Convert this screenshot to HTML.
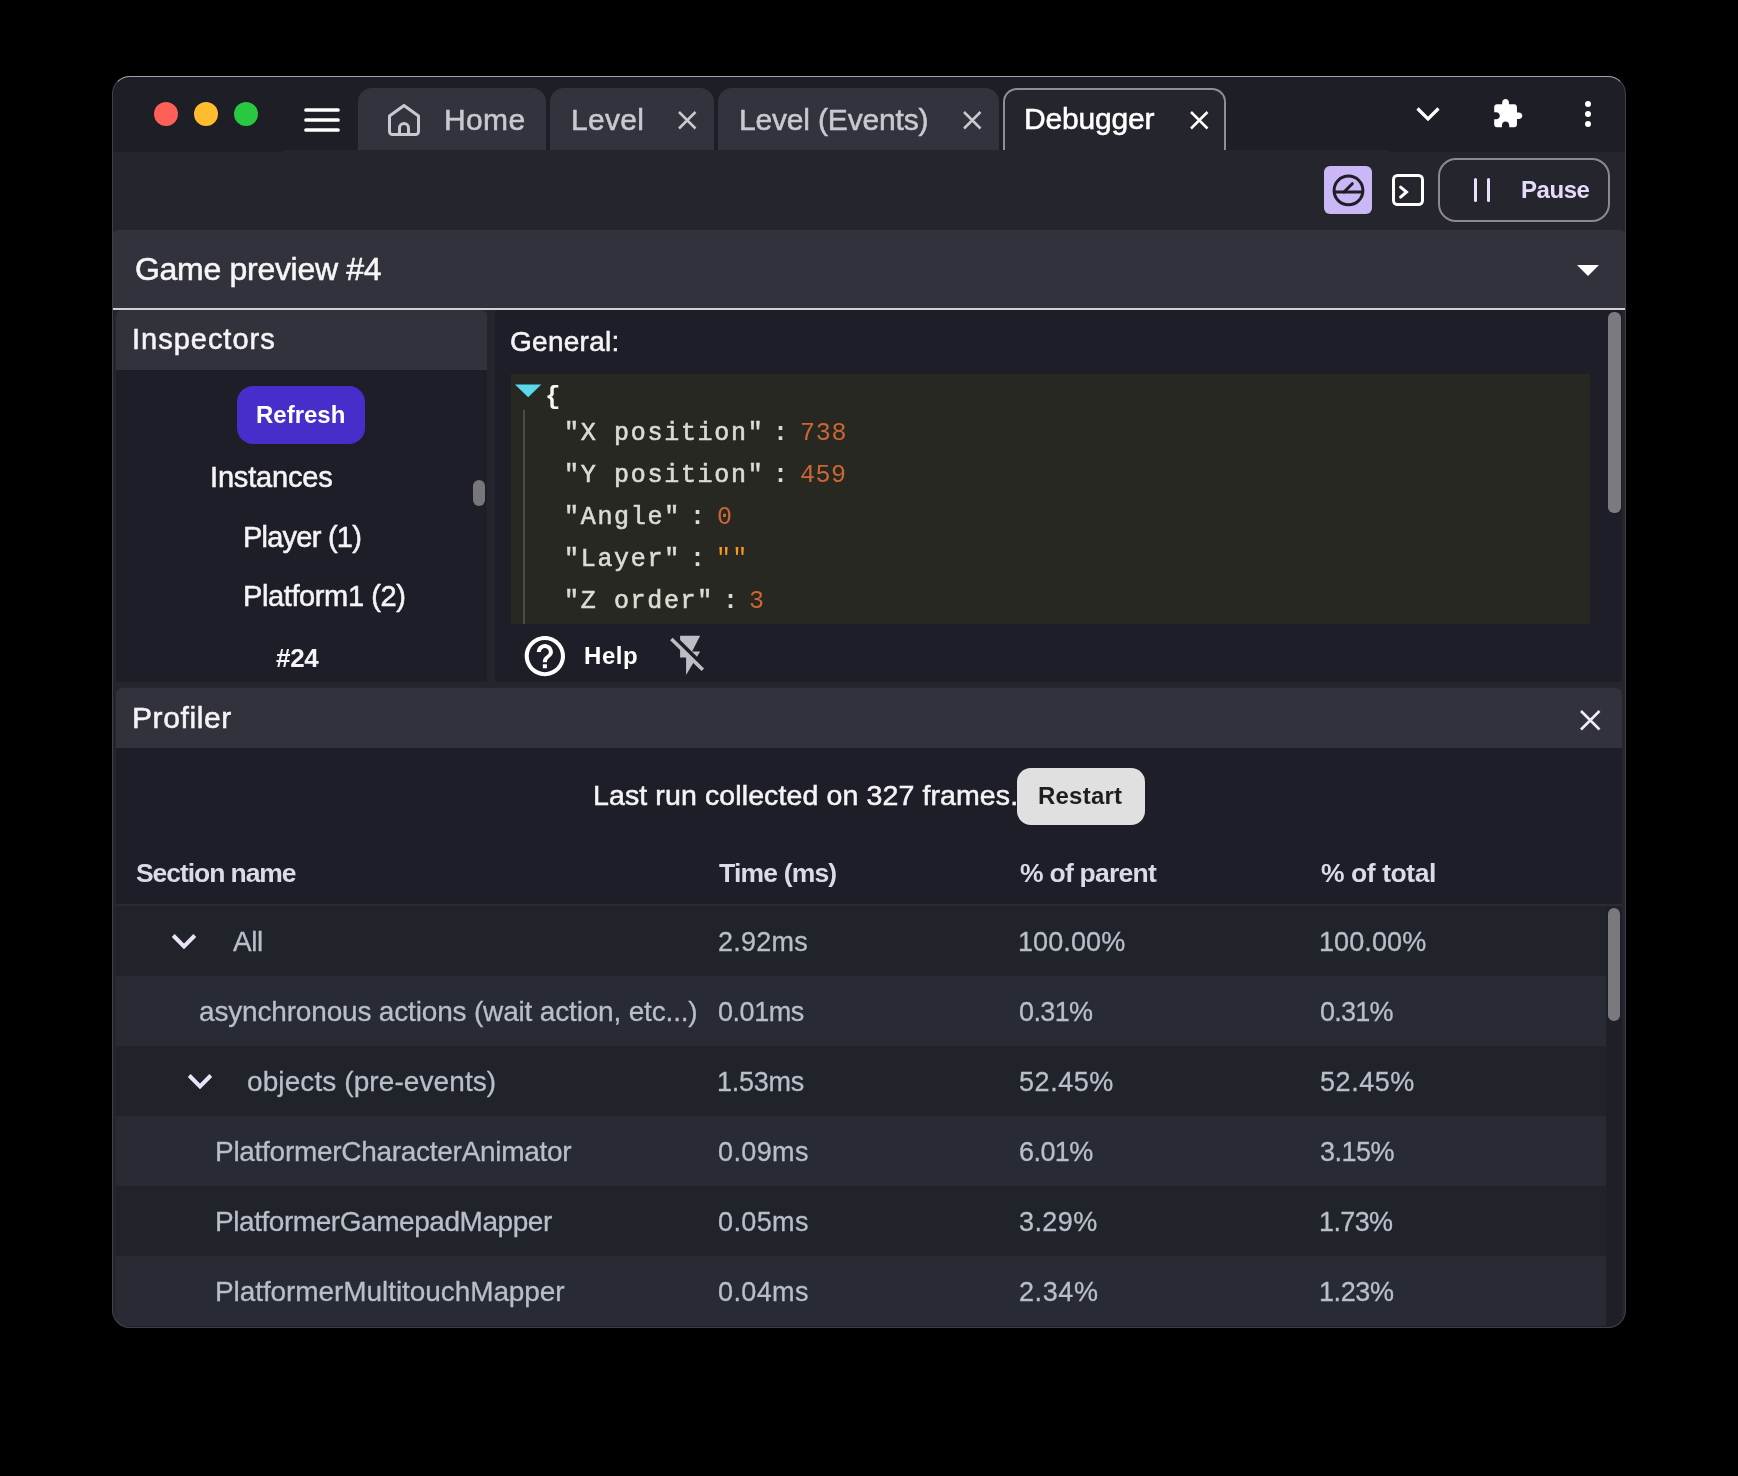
<!DOCTYPE html>
<html><head><meta charset="utf-8"><style>
html,body{margin:0;padding:0;width:1738px;height:1476px;background:#000;overflow:hidden;position:relative}
div,svg{position:absolute;box-sizing:content-box}
.t{white-space:pre;will-change:transform}
</style></head><body>
<div style="left:0;top:0;width:1738px;height:1476px;clip-path:inset(76px 112px 148px 112px round 18px)">
<div style="left:112px;top:76px;width:1514px;height:1252px;background:#25252e;border-radius:18px;overflow:hidden;"><div style="left:0;top:0;width:1514px;height:74px;background:#1e1e26"></div><div style="left:0;top:74px;width:170px;height:1.5px;background:#1e1e26"></div><div style="left:1278px;top:74px;width:240px;height:2px;background:#1e1e26"></div></div>
<div style="left:154px;top:102px;width:24px;height:24px;border-radius:50%;background:#fe5f57"></div>
<div style="left:194px;top:102px;width:24px;height:24px;border-radius:50%;background:#febc2e"></div>
<div style="left:234px;top:102px;width:24px;height:24px;border-radius:50%;background:#28c840"></div>
<svg style="left:300px;top:100px;" width="45" height="40" viewBox="300 100 45 40"><g stroke="#fff" stroke-width="3.7" stroke-linecap="round"><path d="M306 110H338M306 120H338M306 130H338"/></g></svg>
<div style="left:358px;top:88px;width:188px;height:62px;background:#33333d;border-radius:14px 14px 0 0;"></div>
<div style="left:550px;top:88px;width:164px;height:62px;background:#33333d;border-radius:14px 14px 0 0;"></div>
<div style="left:718px;top:88px;width:281px;height:62px;background:#33333d;border-radius:14px 14px 0 0;"></div>
<div style="left:1003px;top:88px;width:219px;height:60px;background:#25252e;border-radius:14px 14px 0 0;border:2px solid #8e8e96;border-bottom:none;"></div>
<svg style="left:380px;top:95px;" width="50" height="50" viewBox="380 95 50 50"><path d="M389.5 116 L404 105.5 L418.5 116 V131.5 a3 3 0 0 1 -3 3 H392.5 a3 3 0 0 1 -3 -3 Z M399.5 134.5 V128 a4.5 4.5 0 0 1 9 0 V134.5" fill="none" stroke="#c9c9d1" stroke-width="3" stroke-linejoin="round"/></svg>
<div class="t" style="left:443.60px;top:104.80px;font-size:30px;line-height:30px;color:#c9c9d1;font-weight:400;font-family:'Liberation Sans', sans-serif;letter-spacing:0.367px;-webkit-text-stroke:0.55px #c9c9d1;">Home</div>
<div class="t" style="left:570.60px;top:104.80px;font-size:30px;line-height:30px;color:#c9c9d1;font-weight:400;font-family:'Liberation Sans', sans-serif;letter-spacing:0.288px;-webkit-text-stroke:0.55px #c9c9d1;">Level</div>
<div class="t" style="left:739.00px;top:104.80px;font-size:30px;line-height:30px;color:#c9c9d1;font-weight:400;font-family:'Liberation Sans', sans-serif;letter-spacing:-0.177px;-webkit-text-stroke:0.55px #c9c9d1;">Level (Events)</div>
<div class="t" style="left:1024.30px;top:104.40px;font-size:30px;line-height:30px;color:#ffffff;font-weight:400;font-family:'Liberation Sans', sans-serif;letter-spacing:-0.193px;-webkit-text-stroke:0.55px #ffffff;">Debugger</div>
<svg style="left:676.25px;top:108.75px;" width="22.5" height="22.5" viewBox="676.25 108.75 22.5 22.5"><path d="M679.25 111.75L695.75 128.25M695.75 111.75L679.25 128.25" stroke="#c9c9d1" stroke-width="2.5"/></svg>
<svg style="left:961.15px;top:108.75px;" width="22.5" height="22.5" viewBox="961.15 108.75 22.5 22.5"><path d="M964.15 111.75L980.65 128.25M980.65 111.75L964.15 128.25" stroke="#c9c9d1" stroke-width="2.5"/></svg>
<svg style="left:1187.75px;top:108.75px;" width="22.5" height="22.5" viewBox="1187.75 108.75 22.5 22.5"><path d="M1190.75 111.75L1207.25 128.25M1207.25 111.75L1190.75 128.25" stroke="#ffffff" stroke-width="2.5"/></svg>
<svg style="left:1410px;top:100px;" width="36" height="30" viewBox="1410 100 36 30"><path d="M1417.5 108.5L1428 119L1438.5 108.5" fill="none" stroke="#fff" stroke-width="3.2"/></svg>
<svg style="left:1488px;top:94px;" width="40" height="40" viewBox="1488 94 40 40"><path transform="translate(1491.5 97.66) scale(1.34)" fill="#fff" d="M20.5 11H19V7c0-1.1-.9-2-2-2h-4V3.5C13 2.12 11.88 1 10.5 1S8 2.12 8 3.5V5H4c-1.1 0-1.99.9-1.99 2v3.8H3.5c1.490 0 2.7 1.21 2.7 2.7s-1.21 2.7-2.7 2.7H2V20c0 1.1.9 2 2 2h3.8v-1.5c0-1.49 1.21-2.7 2.7-2.7 1.49 0 2.7 1.21 2.7 2.7V22H17c1.1 0 2-.9 2-2v-4h1.5c1.38 0 2.5-1.12 2.5-2.5S21.88 11 20.5 11z"/></svg>
<div style="left:1584.7px;top:100.7px;width:6.6px;height:6.6px;border-radius:50%;background:#fff"></div>
<div style="left:1584.7px;top:110.7px;width:6.6px;height:6.6px;border-radius:50%;background:#fff"></div>
<div style="left:1584.7px;top:120.7px;width:6.6px;height:6.6px;border-radius:50%;background:#fff"></div>
<div style="left:1324px;top:166px;width:48px;height:48px;border-radius:6px;background:#c9b8f5"></div>
<svg style="left:1320px;top:160px;" width="56" height="60" viewBox="1320 160 56 60"><g fill="none" stroke="#1f1d28" stroke-width="3" stroke-linecap="round"><circle cx="1348.5" cy="190.4" r="14.4"/><path d="M1334 192H1363" stroke-linecap="butt"/><path d="M1344 192L1352.3 183.7"/></g></svg>
<svg style="left:1388px;top:170px;" width="40" height="40" viewBox="1388 170 40 40"><g fill="none" stroke="#fff" stroke-width="3"><rect x="1393.5" y="175.5" width="29" height="29" rx="4"/><path d="M1400.6 187.1L1406.5 192L1400.6 197.1" stroke-linecap="round"/></g></svg>
<div style="left:1438px;top:158px;width:168px;height:60px;border:2px solid #8d8898;border-radius:18px"></div>
<div style="left:1473.7px;top:178px;width:3.5px;height:24.3px;border-radius:2px;background:#e8e0fc"></div>
<div style="left:1486.8px;top:178px;width:3.5px;height:24.3px;border-radius:2px;background:#e8e0fc"></div>
<div class="t" style="left:1521.34px;top:177.78px;font-size:24px;line-height:24px;color:#e6dcfa;font-weight:700;font-family:'Liberation Sans', sans-serif;letter-spacing:-0.445px;">Pause</div>
<div style="left:112px;top:230px;width:1514px;height:78px;background:#32323c;border-radius:6px 6px 0 0"></div>
<div style="left:112px;top:308px;width:1514px;height:2px;background:#d2d2d6;"></div>
<div class="t" style="left:135.10px;top:253.11px;font-size:32px;line-height:32px;color:#f6f6f6;font-weight:400;font-family:'Liberation Sans', sans-serif;letter-spacing:-0.297px;-webkit-text-stroke:0.55px #f6f6f6;">Game preview #4</div>
<svg style="left:1570px;top:258px;" width="36" height="26" viewBox="1570 258 36 26"><path d="M1577 265H1599L1588 276Z" fill="#fff"/></svg>
<div style="left:116px;top:310px;width:371px;height:372px;background:#1e1e28;border-radius:6px 6px 0 0;overflow:hidden"><div style="left:0;top:0;width:371px;height:60px;background:#32323c"></div></div>
<div class="t" style="left:131.59px;top:325.45px;font-size:29px;line-height:29px;color:#f4f4f6;font-weight:400;font-family:'Liberation Sans', sans-serif;letter-spacing:0.988px;-webkit-text-stroke:0.55px #f4f4f6;">Inspectors</div>
<div style="left:237px;top:386px;width:128px;height:58px;border-radius:16px;background:#472dca"></div>
<div class="t" style="left:256.24px;top:402.98px;font-size:24px;line-height:24px;color:#ffffff;font-weight:700;font-family:'Liberation Sans', sans-serif;letter-spacing:0.000px;">Refresh</div>
<div class="t" style="left:210.29px;top:462.95px;font-size:29px;line-height:29px;color:#f4f4f6;font-weight:400;font-family:'Liberation Sans', sans-serif;letter-spacing:-0.174px;-webkit-text-stroke:0.55px #f4f4f6;">Instances</div>
<div class="t" style="left:242.68px;top:522.65px;font-size:29px;line-height:29px;color:#f4f4f6;font-weight:400;font-family:'Liberation Sans', sans-serif;letter-spacing:-0.768px;-webkit-text-stroke:0.55px #f4f4f6;">Player (1)</div>
<div class="t" style="left:242.68px;top:582.05px;font-size:29px;line-height:29px;color:#f4f4f6;font-weight:400;font-family:'Liberation Sans', sans-serif;letter-spacing:-0.385px;-webkit-text-stroke:0.55px #f4f4f6;">Platform1 (2)</div>
<div class="t" style="left:275.61px;top:644.99px;font-size:26px;line-height:26px;color:#f4f4f6;font-weight:700;font-family:'Liberation Sans', sans-serif;letter-spacing:-0.285px;">#24</div>
<div style="left:473px;top:480px;width:12px;height:26px;border-radius:6px;background:#77777b"></div>
<div style="left:495px;top:310px;width:1127px;height:372px;background:#1e1e28;"></div>
<div class="t" style="left:510.00px;top:327.79px;font-size:28px;line-height:28px;color:#f4f4f6;font-weight:400;font-family:'Liberation Sans', sans-serif;letter-spacing:0.263px;-webkit-text-stroke:0.55px #f4f4f6;">General:</div>
<div style="left:511px;top:374px;width:1079px;height:250px;background:#272822;"></div>
<svg style="left:512px;top:380px;" width="34" height="22" viewBox="512 380 34 22"><path d="M515 384.4H541.3L528.2 397.2Z" fill="#58d9ec"/></svg>
<div style="left:523px;top:410px;width:2px;height:214px;background:#4e4b44;"></div>
<div class="t" style="left:544.53px;top:384.08px;font-size:26px;line-height:26px;color:#f8f8f2;font-weight:700;font-family:'Liberation Mono', monospace;letter-spacing:0.000px;">{</div>
<div class="t" style="left:564.23px;top:420.85px;font-size:25px;line-height:25px;color:#dcdcd4;font-weight:400;font-family:'Liberation Mono', monospace;letter-spacing:1.695px;-webkit-text-stroke:0.6px #dcdcd4">"X position"</div>
<div class="t" style="left:772.75px;top:420.85px;font-size:25px;line-height:25px;color:#dcdcd4;font-weight:700;font-family:'Liberation Mono', monospace;letter-spacing:0.000px;">:</div>
<div class="t" style="left:799.62px;top:420.85px;font-size:25px;line-height:25px;color:#cc6633;font-weight:400;font-family:'Liberation Mono', monospace;letter-spacing:0.750px;">738</div>
<div class="t" style="left:564.23px;top:462.85px;font-size:25px;line-height:25px;color:#dcdcd4;font-weight:400;font-family:'Liberation Mono', monospace;letter-spacing:1.695px;-webkit-text-stroke:0.6px #dcdcd4">"Y position"</div>
<div class="t" style="left:772.75px;top:462.85px;font-size:25px;line-height:25px;color:#dcdcd4;font-weight:700;font-family:'Liberation Mono', monospace;letter-spacing:0.000px;">:</div>
<div class="t" style="left:800.25px;top:462.85px;font-size:25px;line-height:25px;color:#cc6633;font-weight:400;font-family:'Liberation Mono', monospace;letter-spacing:0.500px;">459</div>
<div class="t" style="left:564.23px;top:504.85px;font-size:25px;line-height:25px;color:#dcdcd4;font-weight:400;font-family:'Liberation Mono', monospace;letter-spacing:1.692px;-webkit-text-stroke:0.6px #dcdcd4">"Angle"</div>
<div class="t" style="left:689.65px;top:504.85px;font-size:25px;line-height:25px;color:#dcdcd4;font-weight:700;font-family:'Liberation Mono', monospace;letter-spacing:0.000px;">:</div>
<div class="t" style="left:717.00px;top:504.85px;font-size:25px;line-height:25px;color:#cc6633;font-weight:400;font-family:'Liberation Mono', monospace;letter-spacing:0.000px;">0</div>
<div class="t" style="left:564.23px;top:546.85px;font-size:25px;line-height:25px;color:#dcdcd4;font-weight:400;font-family:'Liberation Mono', monospace;letter-spacing:1.692px;-webkit-text-stroke:0.6px #dcdcd4">"Layer"</div>
<div class="t" style="left:689.65px;top:546.85px;font-size:25px;line-height:25px;color:#dcdcd4;font-weight:700;font-family:'Liberation Mono', monospace;letter-spacing:0.000px;">:</div>
<div class="t" style="left:716.02px;top:546.85px;font-size:25px;line-height:25px;color:#fd971f;font-weight:400;font-family:'Liberation Mono', monospace;letter-spacing:1.250px;">""</div>
<div class="t" style="left:564.23px;top:588.85px;font-size:25px;line-height:25px;color:#dcdcd4;font-weight:400;font-family:'Liberation Mono', monospace;letter-spacing:1.644px;-webkit-text-stroke:0.6px #dcdcd4">"Z order"</div>
<div class="t" style="left:722.65px;top:588.85px;font-size:25px;line-height:25px;color:#dcdcd4;font-weight:700;font-family:'Liberation Mono', monospace;letter-spacing:0.000px;">:</div>
<div class="t" style="left:749.17px;top:588.85px;font-size:25px;line-height:25px;color:#cc6633;font-weight:400;font-family:'Liberation Mono', monospace;letter-spacing:0.000px;">3</div>
<div style="left:1608px;top:312px;width:12.5px;height:200.5px;border-radius:6px;background:#7b7b7f"></div>
<svg style="left:518px;top:628px;" width="52" height="56" viewBox="518 628 52 56"><path transform="translate(520.7 631.9) scale(2.015)" fill="#fff" d="M11 18h2v-2h-2v2zm1-16C6.48 2 2 6.48 2 12s4.48 10 10 10 10-4.48 10-10S17.52 2 12 2zm0 18c-4.41 0-8-3.59-8-8s3.59-8 8-8 8 3.59 8 8-3.59 8-8 8zm0-14c-2.21 0-4 1.790-4 4h2c0-1.1.9-2 2-2s2 .9 2 2c0 2-3 1.75-3 5h2c0-2.25 3-2.5 3-5 0-2.21-1.79-4-4-4z"/></svg>
<div class="t" style="left:583.94px;top:643.58px;font-size:24px;line-height:24px;color:#ffffff;font-weight:700;font-family:'Liberation Sans', sans-serif;letter-spacing:0.553px;">Help</div>
<svg style="left:664px;top:630px;" width="46" height="50" viewBox="664 630 46 50"><path transform="translate(666.1 631.9) scale(2 1.96)" fill="#bdbdc5" d="M3.27 3L2 4.27l5 5V13h3v9l3.58-6.14L17.73 20 19 18.73 3.27 3zM17 10h-4l4-8H7v2.18l8.46 8.46L17 10z"/></svg>
<div style="left:116px;top:688px;width:1506px;height:640px;background:#1e1e28;border-radius:6px 6px 0 0;overflow:hidden"><div style="left:0;top:0;width:1506px;height:60px;background:#32323c"></div></div>
<div class="t" style="left:131.90px;top:702.60px;font-size:30px;line-height:30px;color:#f4f4f6;font-weight:400;font-family:'Liberation Sans', sans-serif;letter-spacing:0.614px;-webkit-text-stroke:0.55px #f4f4f6;">Profiler</div>
<svg style="left:1577.55px;top:707.65px;" width="24.5" height="24.5" viewBox="1577.55 707.65 24.5 24.5"><path d="M1580.55 710.65L1599.05 729.15M1599.05 710.65L1580.55 729.15" stroke="#f0ecfa" stroke-width="2.6"/></svg>
<div class="t" style="left:592.52px;top:781.07px;font-size:28.5px;line-height:28.5px;color:#f4f4f6;font-weight:400;font-family:'Liberation Sans', sans-serif;letter-spacing:0.115px;-webkit-text-stroke:0.55px #f4f4f6;">Last run collected on 327 frames.</div>
<div style="left:1017px;top:767.5px;width:128px;height:57.5px;border-radius:14px;background:#e0e0e0"></div>
<div class="t" style="left:1037.64px;top:783.98px;font-size:24px;line-height:24px;color:#1e1e1e;font-weight:700;font-family:'Liberation Sans', sans-serif;letter-spacing:0.220px;">Restart</div>
<div class="t" style="left:136.01px;top:860.06px;font-size:26.5px;line-height:26.5px;color:#dadbe5;font-weight:700;font-family:'Liberation Sans', sans-serif;letter-spacing:-1.066px;">Section name</div>
<div class="t" style="left:718.74px;top:860.06px;font-size:26.5px;line-height:26.5px;color:#dadbe5;font-weight:700;font-family:'Liberation Sans', sans-serif;letter-spacing:-0.812px;">Time (ms)</div>
<div class="t" style="left:1019.84px;top:860.06px;font-size:26.5px;line-height:26.5px;color:#dadbe5;font-weight:700;font-family:'Liberation Sans', sans-serif;letter-spacing:-0.743px;">% of parent</div>
<div class="t" style="left:1320.84px;top:860.06px;font-size:26.5px;line-height:26.5px;color:#dadbe5;font-weight:700;font-family:'Liberation Sans', sans-serif;letter-spacing:-0.426px;">% of total</div>
<div style="left:116px;top:904px;width:1506px;height:2px;background:#2a2c34;"></div>
<div style="left:116px;top:906px;width:1490px;height:70px;background:#21232b;"></div>
<div class="t" style="left:232.60px;top:928.29px;font-size:28px;line-height:28px;color:#b9bec9;font-weight:400;font-family:'Liberation Sans', sans-serif;letter-spacing:-0.430px;-webkit-text-stroke:0.3px #b9bec9;">All</div>
<div class="t" style="left:717.65px;top:929.14px;font-size:27px;line-height:27px;color:#b9bec9;font-weight:400;font-family:'Liberation Sans', sans-serif;letter-spacing:0.247px;-webkit-text-stroke:0.3px #b9bec9;">2.92ms</div>
<div class="t" style="left:1018.48px;top:929.14px;font-size:27px;line-height:27px;color:#b9bec9;font-weight:400;font-family:'Liberation Sans', sans-serif;letter-spacing:0.103px;-webkit-text-stroke:0.3px #b9bec9;">100.00%</div>
<div class="t" style="left:1319.47px;top:929.14px;font-size:27px;line-height:27px;color:#b9bec9;font-weight:400;font-family:'Liberation Sans', sans-serif;letter-spacing:0.103px;-webkit-text-stroke:0.3px #b9bec9;">100.00%</div>
<svg style="left:168.3px;top:928px;" width="34" height="28" viewBox="168.3 928 34 28"><path d="M173.5 935.5L184.3 946.3L195.10000000000002 935.5" fill="none" stroke="#e9e3fb" stroke-width="4"/></svg>
<div style="left:116px;top:976px;width:1490px;height:70px;background:#282b34;"></div>
<div class="t" style="left:199.18px;top:998.29px;font-size:28px;line-height:28px;color:#b9bec9;font-weight:400;font-family:'Liberation Sans', sans-serif;letter-spacing:-0.173px;-webkit-text-stroke:0.3px #b9bec9;">asynchronous actions (wait action, etc...)</div>
<div class="t" style="left:717.92px;top:999.14px;font-size:27px;line-height:27px;color:#b9bec9;font-weight:400;font-family:'Liberation Sans', sans-serif;letter-spacing:-0.467px;-webkit-text-stroke:0.3px #b9bec9;">0.01ms</div>
<div class="t" style="left:1019.42px;top:999.14px;font-size:27px;line-height:27px;color:#b9bec9;font-weight:400;font-family:'Liberation Sans', sans-serif;letter-spacing:-0.630px;-webkit-text-stroke:0.3px #b9bec9;">0.31%</div>
<div class="t" style="left:1320.42px;top:999.14px;font-size:27px;line-height:27px;color:#b9bec9;font-weight:400;font-family:'Liberation Sans', sans-serif;letter-spacing:-0.755px;-webkit-text-stroke:0.3px #b9bec9;">0.31%</div>
<div style="left:116px;top:1046px;width:1490px;height:70px;background:#21232b;"></div>
<div class="t" style="left:247.08px;top:1068.29px;font-size:28px;line-height:28px;color:#b9bec9;font-weight:400;font-family:'Liberation Sans', sans-serif;letter-spacing:0.091px;-webkit-text-stroke:0.3px #b9bec9;">objects (pre-events)</div>
<div class="t" style="left:716.98px;top:1069.14px;font-size:27px;line-height:27px;color:#b9bec9;font-weight:400;font-family:'Liberation Sans', sans-serif;letter-spacing:-0.278px;-webkit-text-stroke:0.3px #b9bec9;">1.53ms</div>
<div class="t" style="left:1019.42px;top:1069.14px;font-size:27px;line-height:27px;color:#b9bec9;font-weight:400;font-family:'Liberation Sans', sans-serif;letter-spacing:0.552px;-webkit-text-stroke:0.3px #b9bec9;">52.45%</div>
<div class="t" style="left:1320.42px;top:1069.14px;font-size:27px;line-height:27px;color:#b9bec9;font-weight:400;font-family:'Liberation Sans', sans-serif;letter-spacing:0.552px;-webkit-text-stroke:0.3px #b9bec9;">52.45%</div>
<svg style="left:184.4px;top:1068px;" width="34" height="28" viewBox="184.4 1068 34 28"><path d="M189.6 1075.5L200.4 1086.3L211.20000000000002 1075.5" fill="none" stroke="#e9e3fb" stroke-width="4"/></svg>
<div style="left:116px;top:1116px;width:1490px;height:70px;background:#282b34;"></div>
<div class="t" style="left:214.96px;top:1138.29px;font-size:28px;line-height:28px;color:#b9bec9;font-weight:400;font-family:'Liberation Sans', sans-serif;letter-spacing:-0.286px;-webkit-text-stroke:0.3px #b9bec9;">PlatformerCharacterAnimator</div>
<div class="t" style="left:717.92px;top:1139.14px;font-size:27px;line-height:27px;color:#b9bec9;font-weight:400;font-family:'Liberation Sans', sans-serif;letter-spacing:0.373px;-webkit-text-stroke:0.3px #b9bec9;">0.09ms</div>
<div class="t" style="left:1019.15px;top:1139.14px;font-size:27px;line-height:27px;color:#b9bec9;font-weight:400;font-family:'Liberation Sans', sans-serif;letter-spacing:-0.562px;-webkit-text-stroke:0.3px #b9bec9;">6.01%</div>
<div class="t" style="left:1320.42px;top:1139.14px;font-size:27px;line-height:27px;color:#b9bec9;font-weight:400;font-family:'Liberation Sans', sans-serif;letter-spacing:-0.530px;-webkit-text-stroke:0.3px #b9bec9;">3.15%</div>
<div style="left:116px;top:1186px;width:1490px;height:70px;background:#21232b;"></div>
<div class="t" style="left:214.96px;top:1208.29px;font-size:28px;line-height:28px;color:#b9bec9;font-weight:400;font-family:'Liberation Sans', sans-serif;letter-spacing:-0.444px;-webkit-text-stroke:0.3px #b9bec9;">PlatformerGamepadMapper</div>
<div class="t" style="left:717.92px;top:1209.14px;font-size:27px;line-height:27px;color:#b9bec9;font-weight:400;font-family:'Liberation Sans', sans-serif;letter-spacing:0.373px;-webkit-text-stroke:0.3px #b9bec9;">0.05ms</div>
<div class="t" style="left:1019.42px;top:1209.14px;font-size:27px;line-height:27px;color:#b9bec9;font-weight:400;font-family:'Liberation Sans', sans-serif;letter-spacing:0.420px;-webkit-text-stroke:0.3px #b9bec9;">3.29%</div>
<div class="t" style="left:1319.47px;top:1209.14px;font-size:27px;line-height:27px;color:#b9bec9;font-weight:400;font-family:'Liberation Sans', sans-serif;letter-spacing:-0.619px;-webkit-text-stroke:0.3px #b9bec9;">1.73%</div>
<div style="left:116px;top:1256px;width:1490px;height:70px;background:#282b34;"></div>
<div class="t" style="left:214.96px;top:1278.29px;font-size:28px;line-height:28px;color:#b9bec9;font-weight:400;font-family:'Liberation Sans', sans-serif;letter-spacing:-0.081px;-webkit-text-stroke:0.3px #b9bec9;">PlatformerMultitouchMapper</div>
<div class="t" style="left:717.92px;top:1279.14px;font-size:27px;line-height:27px;color:#b9bec9;font-weight:400;font-family:'Liberation Sans', sans-serif;letter-spacing:0.373px;-webkit-text-stroke:0.3px #b9bec9;">0.04ms</div>
<div class="t" style="left:1019.15px;top:1279.14px;font-size:27px;line-height:27px;color:#b9bec9;font-weight:400;font-family:'Liberation Sans', sans-serif;letter-spacing:0.587px;-webkit-text-stroke:0.3px #b9bec9;">2.34%</div>
<div class="t" style="left:1319.47px;top:1279.14px;font-size:27px;line-height:27px;color:#b9bec9;font-weight:400;font-family:'Liberation Sans', sans-serif;letter-spacing:-0.394px;-webkit-text-stroke:0.3px #b9bec9;">1.23%</div>
<div style="left:1606px;top:906px;width:16px;height:422px;background:#1f2027;"></div>
<div style="left:1608px;top:908px;width:12px;height:113px;border-radius:6px;background:#7a7a7e"></div>
</div>
<div style="left:112px;top:76px;width:1512px;height:1250px;border:1px solid #404048;border-top-color:#a4a4a8;border-radius:18px"></div>
</body></html>
